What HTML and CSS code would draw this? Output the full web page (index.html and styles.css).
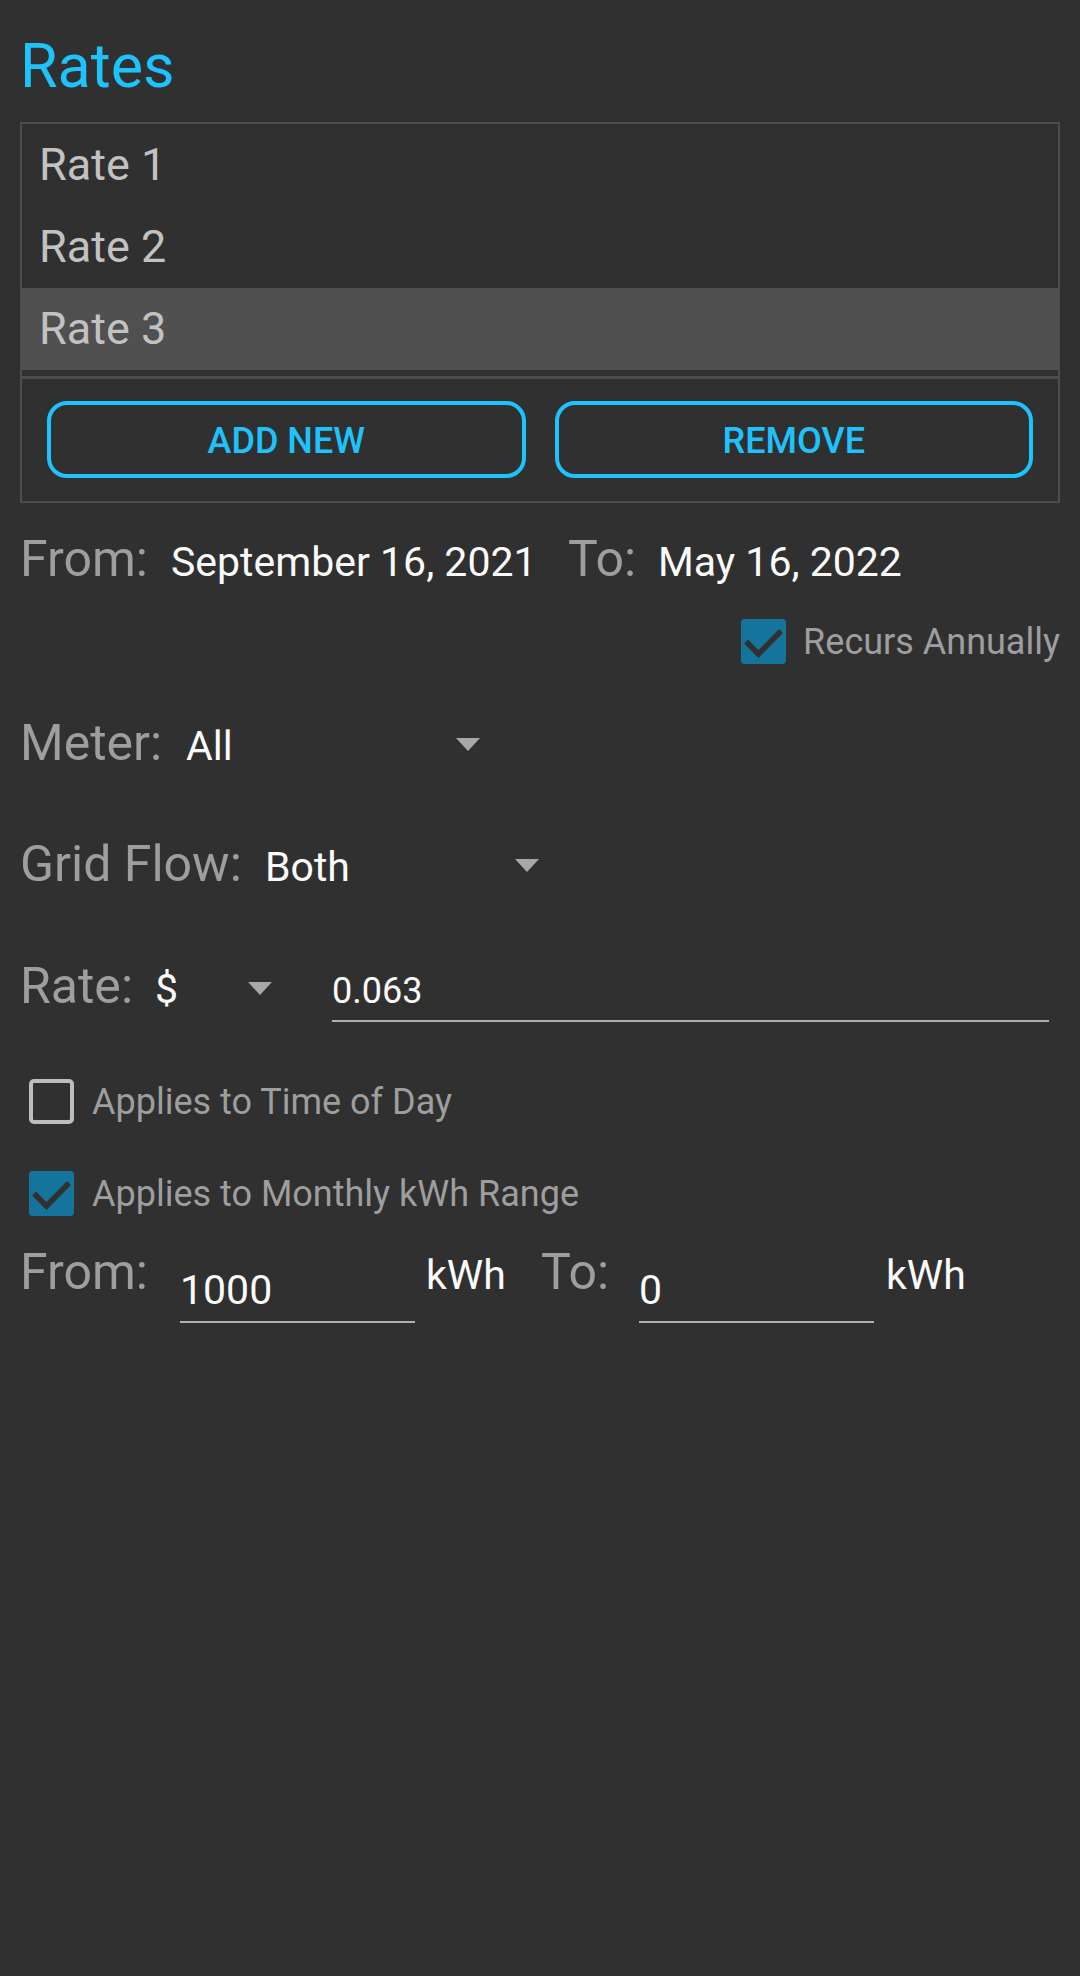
FILE: index.html
```html
<!DOCTYPE html>
<html lang="en">
<head>
    <meta charset="UTF-8">
    <meta name="viewport" content="width=device-width, initial-scale=1.0">
    <title>Rates</title>
    <link rel="stylesheet" href="styles.css">
</head>
<body>
    <div class="page">
        <h1 class="title">Rates</h1>

        <div class="rate-box">
            <ul class="rate-list">
                <li>Rate 1</li>
                <li>Rate 2</li>
                <li class="selected">Rate 3</li>
            </ul>
            <div class="actions">
                <button type="button" class="outline-btn">ADD NEW</button>
                <button type="button" class="outline-btn">REMOVE</button>
            </div>
        </div>

        <div class="field-row dates">
            <span class="label w-from">From:</span><span class="value w-date">September 16, 2021</span><span class="label w-to">To:</span><span class="value">May 16, 2022</span>
        </div>

        <div class="check-row recurs">
            <svg class="box" width="45" height="45" viewBox="0 0 45 45"><rect width="45" height="45" rx="4" fill="#15749b"/><polyline points="5,22.5 17.5,35 40,12" fill="none" stroke="#303030" stroke-width="5.5"/></svg>
            <span class="check-text">Recurs Annually</span>
        </div>

        <div class="field-row meter">
            <span class="label w-meter">Meter:</span><span class="value w-meter-val">All</span><svg class="arrow" width="24" height="13" viewBox="0 0 24 13"><polygon points="0,0 24,0 12,13" fill="#a8a8a8"/></svg>
        </div>

        <div class="field-row grid">
            <span class="label w-grid">Grid Flow:</span><span class="value w-grid-val">Both</span><svg class="arrow" width="24" height="13" viewBox="0 0 24 13"><polygon points="0,0 24,0 12,13" fill="#a8a8a8"/></svg>
        </div>

        <div class="field-row rate">
            <span class="label w-rate">Rate:</span><span class="value w-rate-val">$</span><svg class="arrow arrow-rate" width="24" height="13" viewBox="0 0 24 13"><polygon points="0,0 24,0 12,13" fill="#a8a8a8"/></svg><span class="line-input rate-input">0.063</span>
        </div>

        <div class="check-row tod">
            <span class="box empty"></span>
            <span class="check-text">Applies to Time of Day</span>
        </div>

        <div class="check-row kwh">
            <svg class="box" width="45" height="45" viewBox="0 0 45 45"><rect width="45" height="45" rx="4" fill="#15749b"/><polyline points="5,22.5 17.5,35 40,12" fill="none" stroke="#303030" stroke-width="5.5"/></svg>
            <span class="check-text">Applies to Monthly kWh Range</span>
        </div>

        <div class="field-row range">
            <span class="label w-rfrom">From:</span><span class="line-input low">1000</span><span class="value unit">kWh</span><span class="label w-rto">To:</span><span class="line-input low">0</span><span class="value unit last">kWh</span>
        </div>
    </div>
</body>
</html>
```

FILE: styles.css
```css
body { margin: 0; background: #303030; font-family: Roboto, "Noto Sans", sans-serif; }
.page { padding: 0 20px; }
.title { margin: 26px 0 16px; font-size: 61px; line-height: 80px; font-weight: 400; color: #1ec2fc; }

.rate-box { border: 2px solid #4d4d4d; }
.rate-list { list-style: none; margin: 0; padding: 0 0 6px; }
.rate-list li { height: 82px; line-height: 82px; padding-left: 17px; font-size: 45px; color: #c2c2c2; }
.rate-list li.selected { background: #505050; }
.actions { display: flex; gap: 29px; padding: 22px 25px 23px; border-top: 3px solid #4d4d4d; }
.outline-btn { flex: 1; box-sizing: border-box; height: 77px; padding: 4px 0 0; border: 4px solid #1ec2fc; border-radius: 20px; background: none; color: #1ec2fc; font: 500 36px/65px Roboto, sans-serif; }

.field-row { font-size: 50px; line-height: 60px; white-space: nowrap; }
.label { display: inline-block; font-size: 50px; color: #9e9e9e; }
.value { display: inline-block; font-size: 41px; line-height: 56px; color: #fafafa; }
.arrow { vertical-align: 9px; }
.arrow-rate { vertical-align: 8px; }

.dates { margin-top: 26px; }
.w-from { width: 151px; }
.w-date { width: 397px; }
.w-to { width: 90px; }

.meter { margin-top: 49px; }
.w-meter { width: 166px; }
.w-meter-val { width: 270px; }
.grid { margin-top: 60px; }
.w-grid { width: 245px; }
.w-grid-val { width: 250px; }
.rate { margin-top: 61px; }
.w-rate { width: 135px; }
.w-rate-val { width: 93px; }

.line-input { display: inline-block; box-sizing: border-box; font-size: 41px; line-height: 40px; color: #fafafa; padding-bottom: 9px; border-bottom: 2px solid #b0b0b0; }
.rate-input { width: 717px; margin-left: 60px; font-size: 36px; }
.low { width: 235px; padding-bottom: 11px; vertical-align: -15px; }
.unit { margin-left: 11px; width: 115px; }
.unit.last { margin-left: 12px; width: auto; }
.w-rfrom { width: 160px; }
.w-rto { width: 98px; }

.check-row { display: flex; align-items: center; gap: 18px; height: 45px; }
.check-text { font-size: 36px; color: #9e9e9e; }
.box { flex: none; }
.box.empty { box-sizing: border-box; width: 45px; height: 45px; border: 4px solid #bdbdbd; border-radius: 5px; }
.recurs { justify-content: flex-end; gap: 17px; margin-top: 29px; }
.tod { margin-top: 57px; padding-left: 9px; }
.kwh { margin-top: 47px; padding-left: 9px; }
.range { margin-top: 26px; }
```
